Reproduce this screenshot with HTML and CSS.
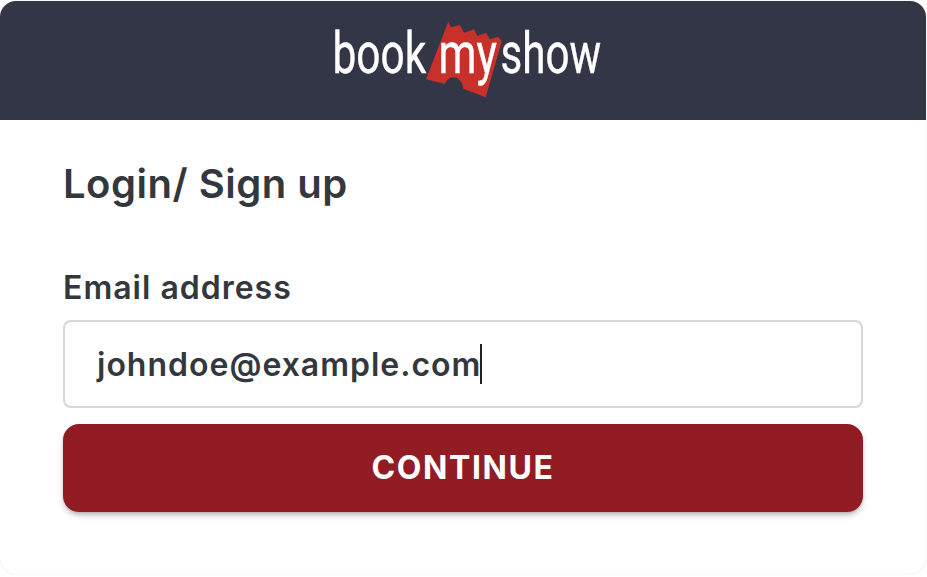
FILE: index.html
```html
<!DOCTYPE html>
<html lang="en">
<head>
<meta charset="utf-8">
<title>Login</title>
<link rel="stylesheet" href="styles.css">
</head>
<body>
<main class="card">
  <header class="head">
    <svg class="logo" viewBox="0 0 280 80" width="280" height="80" aria-label="bookmyshow">
      <path class="ticket" d="M117.300 3.700L119.700 9.300L129 7L133 14.700L143 11.300L146.300 18L155 14.700L159 21.300L167.300 18.700L170.700 23.700L154.700 79.300L132.300 70.700C131 58 118 55 114 66L95 61.300Z"/>
      <text class="word" transform="translate(1.500 55) scale(.745 1)">book</text>
      <text class="word" transform="translate(107.500 55) scale(.76 1)">my</text>
      <text class="word" transform="translate(169.500 55) scale(.74 1)">show</text>
    </svg>
  </header>
  <section class="body">
    <h1 class="title">Login/ Sign up</h1>
    <label class="label" for="email">Email address</label>
    <div class="input" id="email"><span class="value">johndoe@example.com</span><span class="caret"></span></div>
    <button class="btn" type="button">CONTINUE</button>
  </section>
</main>
</body>
</html>
```
FILE: styles.css
```css
* { box-sizing: border-box; }
html, body { margin: 0; height: 100%; background: #fff; }
body { overflow: hidden; font-family: Inter, "Liberation Sans", sans-serif; color: #32383e; padding-top: 1px; }
.card {
  width: 926px;
  height: 573px;
  background: #fff;
  border-radius: 16px;
  overflow: hidden;
  box-shadow: 0 0 1px rgba(0,0,0,.25);
}
.head {
  height: 119px;
  background: #333646;
  display: flex;
  justify-content: center;
  padding: 17px 0 0 16px;
}
.logo { display: block; }
.ticket { fill: #c8302a; }
.word { fill: #fff; stroke: #fff; stroke-width: .4px; font-family: Roboto, sans-serif; font-weight: 400; font-size: 57px; }
.body { padding: 39px 63px 0 63px; display: flex; flex-direction: column; }
.title { margin: 0; font-size: 40px; line-height: 50px; font-weight: 600; letter-spacing: 0.5px; }
.label { margin: 59px 0 0; font-size: 32px; line-height: 40px; font-weight: 600; letter-spacing: 1px; }
.input {
  margin-top: 12px;
  height: 88px;
  border: 2px solid #d3d6da;
  border-radius: 8px;
  padding: 0 32px;
  display: flex;
  align-items: center;
  font-size: 32px;
  font-weight: 600;
  letter-spacing: 1px;
}
.caret { width: 2px; height: 40px; background: #222; margin-left: -1px; }
.btn {
  margin-top: 16px;
  height: 88px;
  padding: 0 0 2px;
  border: 0;
  border-radius: 16px;
  background: #921c24;
  color: #fff;
  font: 700 32px Inter, "Liberation Sans", sans-serif;
  letter-spacing: 1.6px;
  box-shadow: 0 4px 6px -1px rgba(0,0,0,.25), 0 2px 4px -2px rgba(0,0,0,.2);
}
```
